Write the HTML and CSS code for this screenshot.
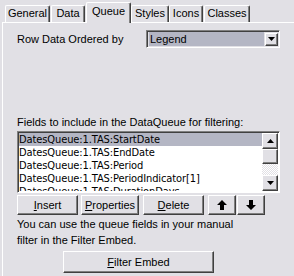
FILE: index.html
```html
<!DOCTYPE html>
<html lang="en">
<head>
  <meta charset="UTF-8">
  <title>Queue Properties</title>
  <link rel="stylesheet" href="styles.css">
</head>
<body>
  <div class="tabs">
    <div class="tab tab-general">General</div>
    <div class="tab tab-data">Data</div>
    <div class="tab active">Queue</div>
    <div class="tab tab-styles">Styles</div>
    <div class="tab tab-icons">Icons</div>
    <div class="tab tab-classes">Classes</div>
  </div>

  <div class="panel">
    <div class="order-row">
      <span class="label">Row Data Ordered by</span>
      <div class="combo">
        <span class="combo-value">Legend</span>
        <span class="combo-btn">
          <svg width="7" height="4" viewBox="0 0 7 4"><polygon points="0,0 7,0 3.5,4" fill="#000"/></svg>
        </span>
      </div>
    </div>

    <p class="fields-label">Fields to include in the DataQueue for filtering:</p>

    <div class="listbox">
      <ul class="items">
        <li class="selected">DatesQueue:1.TAS:StartDate</li>
        <li>DatesQueue:1.TAS:EndDate</li>
        <li>DatesQueue:1.TAS:Period</li>
        <li>DatesQueue:1.TAS:PeriodIndicator[1]</li>
        <li>DatesQueue:1.TAS:DurationDays</li>
      </ul>
      <div class="scrollbar">
        <span class="sb-btn">
          <svg width="7" height="4" viewBox="0 0 7 4"><polygon points="3.5,0 7,4 0,4" fill="#000"/></svg>
        </span>
        <span class="sb-thumb"></span>
        <span class="sb-track"></span>
        <span class="sb-btn">
          <svg width="7" height="4" viewBox="0 0 7 4"><polygon points="0,0 7,0 3.5,4" fill="#000"/></svg>
        </span>
      </div>
    </div>

    <div class="actions">
      <button class="btn btn-insert"><u>I</u>nsert</button>
      <button class="btn btn-props"><u>P</u>roperties</button>
      <button class="btn btn-delete"><u>D</u>elete</button>
      <button class="btn btn-arrow btn-up">
        <svg width="10" height="10" viewBox="0 0 10 10"><polygon points="5,0 10,5 7,5 7,10 3,10 3,5 0,5" fill="#000"/></svg>
      </button>
      <button class="btn btn-arrow">
        <svg width="10" height="10" viewBox="0 0 10 10"><polygon points="3,0 7,0 7,5 10,5 5,10 0,5 3,5" fill="#000"/></svg>
      </button>
    </div>

    <p class="note">You can use the queue fields in your manual<br>filter in the Filter Embed.</p>

    <button class="btn btn-wide"><u>F</u>ilter Embed</button>
  </div>
</body>
</html>
```

FILE: styles.css
```css
body {
  margin: 0;
  background: #e1e0e5;
  font-family: "Liberation Sans", Arial, sans-serif;
  font-size: 11px;
  color: #000;
  overflow: hidden;
}
.tabs {
  display: flex;
  align-items: flex-end;
  height: 22px;
  padding-left: 5px;
}
.tab {
  height: 16px;
  line-height: 15px;
  text-align: center;
  margin-right: 1px;
  border-top: 1px solid #fff;
  border-left: 1px solid #fff;
  border-right: 1px solid #404040;
  box-shadow: inset -1px 0 #808080;
  border-radius: 2px 2px 0 0;
}
.tab-general { width: 43px; }
.tab-data { width: 32px; }
.tab-styles { width: 36px; margin-right: 0; }
.tab-icons { width: 32px; }
.tab-classes { width: 44px; }
.tab.active {
  position: relative;
  z-index: 1;
  width: 43px;
  height: 20px;
  line-height: 17px;
  margin: 0 0 -1px 0;
  background: #e1e0e5;
}
.panel {
  margin-left: 2px;
  width: 288px;
  height: 246px;
  border-top: 1px solid #fff;
  border-left: 1px solid #fff;
  border-right: 1px solid #404040;
  box-shadow: inset -1px 0 #808080;
  padding: 7px 0 0 14px;
}
.order-row {
  display: flex;
  align-items: center;
  height: 18px;
}
.label {
  width: 129px;
}
.combo {
  display: flex;
  align-items: center;
  width: 129px;
  height: 14px;
  border: 1px solid;
  border-color: #808080 #fff #fff #808080;
  box-shadow: inset 1px 1px #404040;
  padding: 1px 1px 1px 2px;
}
.combo-value {
  flex: 1;
  height: 14px;
  line-height: 14px;
  background: #b4b6c4;
  padding-left: 1px;
}
.combo-btn {
  display: flex;
  align-items: center;
  justify-content: center;
  width: 11px;
  height: 11px;
  margin-left: 1px;
  border: 1px solid;
  border-color: #fff #404040 #404040 #fff;
  box-shadow: inset -1px -1px #808080;
}
.fields-label {
  margin: 68px 0 0;
  line-height: 13px;
}
.listbox {
  display: flex;
  width: 259px;
  height: 58px;
  margin-top: 2px;
  border: 1px solid;
  border-color: #808080 #fff #fff #808080;
  box-shadow: inset 1px 1px #404040;
  padding: 1px;
  background: #fff;
}
.items {
  flex: 1;
  list-style: none;
  margin: 0;
  padding: 0;
  overflow: hidden;
  font-family: "DejaVu Sans Condensed", "DejaVu Sans", sans-serif;
  letter-spacing: -0.1px;
}
.items li {
  height: 13px;
  line-height: 13px;
  white-space: nowrap;
}
.items li.selected {
  background: #b4b6c4;
}
.scrollbar {
  display: flex;
  flex-direction: column;
  width: 16px;
  background: #e1e0e5;
}
.sb-btn, .sb-thumb {
  display: flex;
  align-items: center;
  justify-content: center;
  height: 14px;
  border: 1px solid;
  border-color: #fff #404040 #404040 #fff;
  box-shadow: inset -1px -1px #808080;
  background: #e1e0e5;
}
.sb-thumb {
  height: 13px;
}
.sb-track {
  flex: 1;
  background-color: #fff;
  background-image: repeating-conic-gradient(#e1e0e5 0 25%, #fff 0 50%);
  background-size: 2px 2px;
}
.actions {
  display: flex;
  margin-top: 2px;
}
.btn {
  height: 20px;
  padding: 0;
  border: 1px solid;
  border-color: #fff #404040 #404040 #fff;
  box-shadow: inset -1px -1px #808080;
  background: #e1e0e5;
  font-family: "Liberation Sans", Arial, sans-serif;
  font-size: 11px;
  color: #000;
  display: flex;
  align-items: center;
  justify-content: center;
}
.btn-insert { width: 61px; margin-right: 3px; }
.btn-props { width: 58px; margin-right: 4px; }
.btn-delete { width: 61px; margin-right: 4px; }
.btn-arrow { width: 28px; }
.btn-up { margin-right: 1px; }
.note {
  margin: 1px 0 0;
  line-height: 16px;
}
.btn-wide {
  width: 151px;
  height: 22px;
  margin: 3px 0 0 46px;
}
```
